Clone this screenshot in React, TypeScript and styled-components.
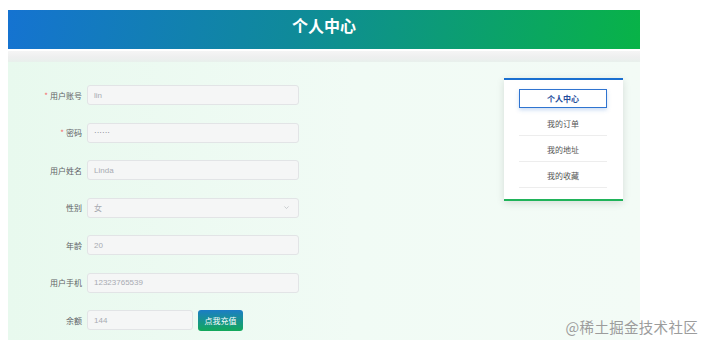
import styled, { createGlobalStyle, css } from "styled-components";

const GlobalStyle = createGlobalStyle`
  html, body {
    margin: 0;
    padding: 0;
    background: #fff;
    font-family: "Noto Sans CJK SC", "Noto Sans", sans-serif;
    overflow: hidden;
  }
`;

const Page = styled.div`
  position: relative;
  width: 702px;
  height: 340px;
  padding: 10px 0 0 8px;
  box-sizing: border-box;
`;

const Main = styled.div`
  width: 632px;
  display: flex;
  flex-direction: column;
`;

const Header = styled.header`
  height: 39px;
  background: linear-gradient(100deg, #1573d1 0%, #0f8a9a 45%, #08b347 100%);
  display: flex;
  justify-content: center;
  align-items: flex-start;
  padding-top: 4px;
  box-sizing: border-box;
  color: #fff;
  font-size: 16px;
  font-weight: 700;
  line-height: 22px;
`;

const Strip = styled.div`
  margin-top: 2px;
  height: 11px;
  background: linear-gradient(180deg, #f5f5f5 0%, #eeefef 55%, #e8f0ec 100%);
`;

const Content = styled.div`
  height: 278px;
  display: flex;
  align-items: flex-start;
  background: linear-gradient(90deg, #e8f9ee 0%, #f1fbf5 55%, #f3fbf6 100%);
`;

const Form = styled.div`
  padding-top: 23px;
  display: flex;
  flex-direction: column;
  gap: 17.5px;
`;

const Row = styled.div`
  display: flex;
  align-items: center;
  gap: 5px;
  height: 20px;
`;

const Label = styled.label`
  width: 74px;
  text-align: right;
  font-size: 8px;
  color: #606266;
`;

const Star = styled.span`
  color: #f56c6c;
  margin-right: 2px;
`;

const Field = styled.div<{ $w?: number; $secret?: boolean }>`
  width: ${(p) => p.$w ?? 212}px;
  height: 20px;
  box-sizing: border-box;
  border: 1px solid #e2e4e6;
  border-radius: 3px;
  background: #f5f6f6;
  display: flex;
  align-items: center;
  justify-content: space-between;
  padding: 0 8px 0 6px;
  font-family: "Liberation Sans", "Noto Sans CJK SC", sans-serif;
  font-size: 8px;
  color: ${(p) => (p.$secret ? "#707378" : "#a8abb2")};
`;

const Chevron = styled.svg`
  width: 7px;
  height: 7px;
`;

const Button = styled.button`
  width: 45px;
  height: 21px;
  border: none;
  border-radius: 3px;
  background: linear-gradient(180deg, #1c7dc6 0%, #12a95a 100%);
  color: #fff;
  font-family: inherit;
  font-size: 8px;
  padding: 0;
`;

const Side = styled.nav`
  margin: 16px 17px 0 auto;
  width: 119px;
  background: #fff;
  border-top: 2px solid #1a6fd0;
  border-bottom: 2px solid #20b35a;
  box-shadow: 0 2px 8px rgba(0, 0, 0, 0.12);
  padding: 9px 16px 11px 15px;
  box-sizing: border-box;
  display: flex;
  flex-direction: column;
`;

const itemBase = css`
  text-align: center;
  font-size: 8px;
`;

const Active = styled.div`
  ${itemBase}
  height: 19px;
  line-height: 17px;
  margin-bottom: 2px;
  box-sizing: border-box;
  border: 1px solid #2f74d0;
  box-shadow: 0 2px 4px rgba(47, 116, 208, 0.25);
  color: #1f4e9c;
  font-weight: 700;
`;

const Item = styled.div`
  ${itemBase}
  height: 26px;
  line-height: 28px;
  box-sizing: border-box;
  border-bottom: 1px solid #ededed;
  color: #555;
`;

const Watermark = styled.div`
  position: absolute;
  right: 4px;
  bottom: 3px;
  font-size: 14.5px;
  color: #9c9c9c;
  letter-spacing: 0.3px;
`;

const fields = [
  { label: "用户账号", value: "lin", req: true },
  { label: "密码", value: "······", req: true, secret: true },
  { label: "用户姓名", value: "Linda" },
];

const rest = [
  { label: "年龄", value: "20" },
  { label: "用户手机", value: "12323765539" },
];

const App = () => (
  <>
    <GlobalStyle />
    <Page>
      <Main>
        <Header>个人中心</Header>
        <Strip />
        <Content>
          <Form>
            {fields.map((f) => (
              <Row key={f.label}>
                <Label>
                  {f.req && <Star>*</Star>}
                  {f.label}
                </Label>
                <Field $secret={f.secret}>{f.value}</Field>
              </Row>
            ))}
            <Row>
              <Label>性别</Label>
              <Field>
                女
                <Chevron viewBox="0 0 10 10">
                  <path d="M2 3.5 L5 6.5 L8 3.5" fill="none" stroke="#b8bbc0" strokeWidth="1" />
                </Chevron>
              </Field>
            </Row>
            {rest.map((f) => (
              <Row key={f.label}>
                <Label>{f.label}</Label>
                <Field>{f.value}</Field>
              </Row>
            ))}
            <Row>
              <Label>余额</Label>
              <Field $w={106}>144</Field>
              <Button>点我充值</Button>
            </Row>
          </Form>
          <Side>
            <Active>个人中心</Active>
            <Item>我的订单</Item>
            <Item>我的地址</Item>
            <Item>我的收藏</Item>
          </Side>
        </Content>
      </Main>
      <Watermark>@稀土掘金技术社区</Watermark>
    </Page>
  </>
);

export default App;
